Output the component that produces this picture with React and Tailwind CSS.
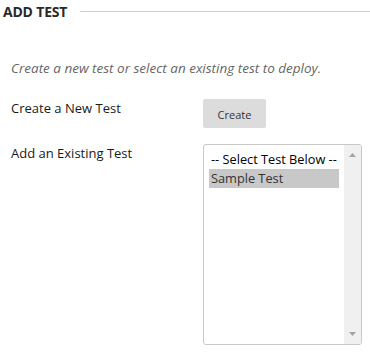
export default function App() {
  return (
    <div className="w-[370px] h-[353px] bg-white overflow-hidden" style={{ fontFamily: '"Open Sans", "DejaVu Sans", sans-serif' }}>
      <div className="flex items-center pt-[2px] pl-[3px]">
        <h2 className="text-[14px] leading-[20px] font-bold text-[#2a2a2a] m-0 tracking-[-0.2px]">ADD TEST</h2>
        <div className="flex-1 ml-[13px] h-px bg-[#cccccc] mt-[-2px]"></div>
      </div>
      <p className="mt-[37px] pl-[11px] text-[13.5px] leading-[18px] italic text-[#666666]">
        Create a new test or select an existing test to deploy.
      </p>
      <div className="mt-[22px] pl-[11px] grid grid-cols-[192px_1fr] gap-y-[16px]">
        <div className="text-[13px] leading-[18px] text-[#1a1a1a]">Create a New Test</div>
        <div>
          <button className="h-[29px] w-[63px] bg-[#dcdcdc] rounded-[2px] text-[11px] leading-[15px] text-[#333333] pt-[2px]">
            Create
          </button>
        </div>
        <div className="text-[13px] leading-[18px] text-[#1a1a1a]">Add an Existing Test</div>
        <div>
          <div className="w-[159px] h-[201px] border border-[#c8c8c8] rounded-[3px] flex overflow-hidden">
            <div className="flex-1 p-[5px]">
              <div className="h-[19px] px-[2px] text-[12.75px] leading-[19px] text-black whitespace-nowrap">-- Select Test Below --</div>
              <div className="h-[19px] px-[2px] text-[12.75px] leading-[19px] text-[#333333] bg-[#c8c8c8] whitespace-nowrap">Sample Test</div>
            </div>
            <div className="w-[17px] bg-[#f0f0f0] flex flex-col items-center justify-between py-[8px]">
              <svg width="7" height="4" viewBox="0 0 7 4"><polygon points="3.5,0 7,4 0,4" fill="#a3a3a3" /></svg>
              <svg width="7" height="4" viewBox="0 0 7 4"><polygon points="0,0 7,0 3.5,4" fill="#a3a3a3" /></svg>
            </div>
          </div>
        </div>
      </div>
    </div>
  );
}
